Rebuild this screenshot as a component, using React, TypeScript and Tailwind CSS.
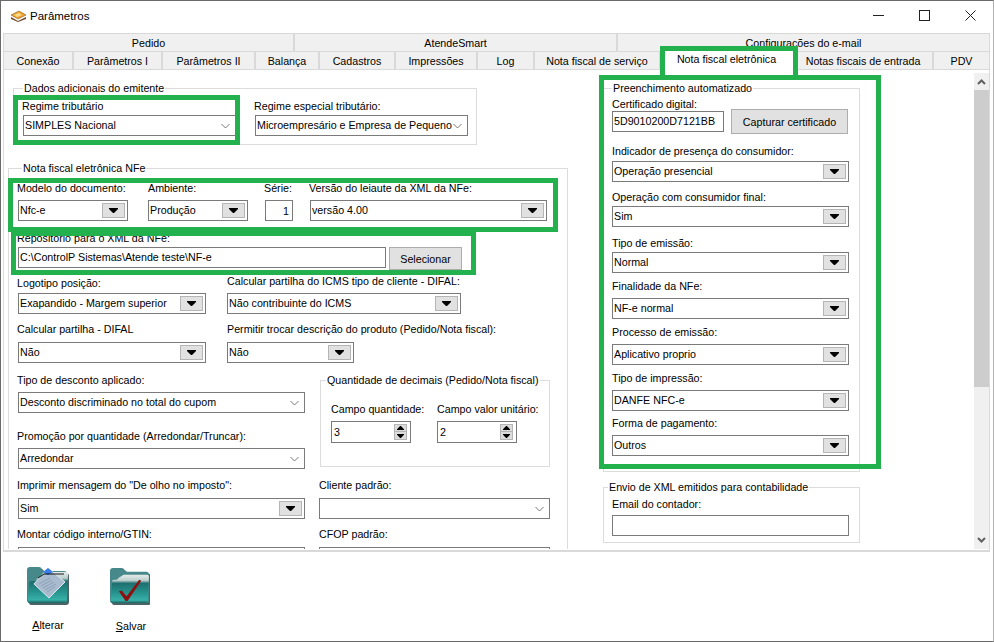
import React from 'react';

const Chevron = () => (
  <svg width="9" height="6" viewBox="0 0 9 6" className="mr-[5px] shrink-0">
    <path d="M0.500 1l4 4 4-4" fill="none" stroke="#777" strokeWidth="1" />
  </svg>
);

const Arrow = ({ up = false, small = false }: { up?: boolean; small?: boolean }) => (
  <svg width={small ? 7 : 9} height={small ? 4 : 5} viewBox="0 0 9 5" preserveAspectRatio="none" className={up ? 'rotate-180' : ''}>
    <path d="M0 0h9v1L6 4H5.500v1h-2V4H3L0 1z" fill="#000" />
  </svg>
);

const Label = ({ children }: { children: React.ReactNode }) => (
  <div className="h-[14px] leading-[14px] whitespace-nowrap">{children}</div>
);

// combo with the grey drop button
const Drop = ({ value, className = '' }: { value?: string; className?: string }) => (
  <div className={`h-[21px] border border-[#7a7a7a] bg-white flex items-center justify-between pl-[1px] pr-[2px] overflow-hidden ${className}`}>
    <span className="whitespace-nowrap -mt-[1px]">{value}</span>
    <div className="w-[23px] h-[15px] shrink-0 bg-[#e1e1e1] border border-[#b5b5b5] flex items-center justify-center">
      <Arrow />
    </div>
  </div>
);

// flat combo with the thin chevron
const Combo = ({ value, className = '' }: { value?: string; className?: string }) => (
  <div className={`h-[21px] border border-[#7a7a7a] bg-white flex items-center justify-between pl-[1px] overflow-hidden ${className}`}>
    <span className="whitespace-nowrap -mt-[1px]">{value}</span>
    <Chevron />
  </div>
);

const Input = ({ value, className = '' }: { value?: string; className?: string }) => (
  <div className={`h-[21px] border border-[#7a7a7a] bg-white flex items-center pl-[1px] whitespace-nowrap ${className}`}>
    <span className="-mt-[1px]">{value}</span>
  </div>
);

const Spin = ({ value }: { value: string }) => (
  <div className="w-[80px] h-[22px] border border-[#7a7a7a] bg-white flex items-center justify-between pl-[2px] pr-[3px]">
    <span>{value}</span>
    <div className="w-[13px] flex flex-col">
      <div className="h-[8px] bg-[#dcdcdc] border border-[#b5b5b5] flex items-center justify-center"><Arrow up small /></div>
      <div className="h-[8px] bg-[#dcdcdc] border border-t-0 border-[#b5b5b5] flex items-center justify-center"><Arrow small /></div>
    </div>
  </div>
);

const GrayButton = ({ text, className = '' }: { text: string; className?: string }) => (
  <div className={`bg-[#e1e1e1] border border-[#adadad] flex items-center justify-center whitespace-nowrap ${className}`}>{text}</div>
);

const row1 = [
  { label: 'Pedido', w: 'w-[291px]' },
  { label: 'AtendeSmart', w: 'w-[323px]' },
  { label: 'Configurações do e-mail', w: 'w-[373px]' },
];

const row2 = [
  { label: 'Conexão', w: 'w-[70px]' },
  { label: 'Parâmetros I', w: 'w-[89px]' },
  { label: 'Parâmetros II', w: 'w-[93px]' },
  { label: 'Balança', w: 'w-[64px]' },
  { label: 'Cadastros', w: 'w-[76px]' },
  { label: 'Impressões', w: 'w-[82px]' },
  { label: 'Log', w: 'w-[57px]' },
  { label: 'Nota fiscal de serviço', w: 'w-[126px]' },
  { label: 'Nota fiscal eletrônica', w: 'w-[133px]', active: true },
  { label: 'Notas fiscais de entrada', w: 'w-[140px]' },
  { label: 'PDV', w: 'w-[57px]' },
];

const autoFields = [
  { label: 'Indicador de presença do consumidor:', value: 'Operação presencial', mt: 'mt-[10px]', gap: 'mt-[3px]' },
  { label: 'Operação com consumidor final:', value: 'Sim', mt: 'mt-[8px]', gap: 'mt-[2px]' },
  { label: 'Tipo de emissão:', value: 'Normal', mt: 'mt-[9px]', gap: 'mt-[2px]' },
  { label: 'Finalidade da NFe:', value: 'NF-e normal', mt: 'mt-[6px]', gap: 'mt-[5px]' },
  { label: 'Processo de emissão:', value: 'Aplicativo proprio', mt: 'mt-[6px]', gap: 'mt-[5px]' },
  { label: 'Tipo de impressão:', value: 'DANFE NFC-e', mt: 'mt-[6px]', gap: 'mt-[5px]' },
  { label: 'Forma de pagamento:', value: 'Outros', mt: 'mt-[5px]', gap: 'mt-[5px]' },
];

const FolderBase = ({ id }: { id: string }) => (
  <>
    <defs>
      <linearGradient id={id} x1="0" y1="0" x2="0" y2="1">
        <stop offset="0" stopColor="#e6ebea" />
        <stop offset="0.2" stopColor="#b9cfcc" />
        <stop offset="0.3" stopColor="#1f6f70" />
        <stop offset="0.6" stopColor="#248f8a" />
        <stop offset="0.9" stopColor="#37b0a8" />
        <stop offset="1" stopColor="#17605f" />
      </linearGradient>
    </defs>
    <path d="M2 5q0-3 3-3h9q2 0 3 2l1 2h21q3 0 3 3v26q0 3-3 3H4q-2 0-2-3z" fill="#0f2f30" opacity="0.75" transform="translate(1 1)" />
    <path d="M1 4q0-3 3-3h9q2 0 3 2l1 2h21q3 0 3 3v26q0 3-3 3H4q-3 0-3-3z" fill="#47898b" />
  </>
);

const FolderAlterar = () => (
  <svg width="46" height="40" viewBox="0 0 46 40">
    <FolderBase id="fa" />
    <path d="M12 12L22 6h18q3 0 2 3l-1 25q0 3-3 3H4q-3 0-2-3l1-17q0-2 2-2h3z" fill="url(#fa)" />
    <path d="M22 2L39 16 23 32 8 18z" fill="#a9bccf" stroke="#dfe7ef" strokeWidth="1" />
    <path d="M22 2l5 4-5 3-5-3z" fill="#3b7de8" />
    <path d="M13 18l11-6M15 20l11-6M17 22l11-6M19 24l11-6M21 26l8-5" stroke="#8598ae" strokeWidth="0.8" />
    <path d="M12 12l6-4h20" fill="none" stroke="#000" strokeWidth="0.9" />
  </svg>
);

const FolderSalvar = () => (
  <svg width="41" height="38" viewBox="0 0 42 39">
    <FolderBase id="fs" />
    <path d="M10 11l5-3h24q2 0 2 2l-1 24q0 3-3 3H4q-3 0-2-3l1-19q0-2 2-2h3z" fill="url(#fs)" />
    <path d="M10 25l3-1 5 6 13-17 2 1-14 21h-2z" fill="#8e1010" />
  </svg>
);

const TitleIcon = () => (
  <svg width="17" height="13" viewBox="0 0 17 13">
    <path d="M1 5l8-4 7 4-8 4z" fill="#f0a32e" stroke="#8a5a1c" strokeWidth="0.6" />
    <path d="M1 7l7 4 8-4v2l-8 3-7-3z" fill="#6e4a2a" />
    <path d="M4 5l5-2 3 2-5 2z" fill="#f9dd8a" />
  </svg>
);

export default function App() {
  return (
    <div className="w-[994px] h-[642px] relative overflow-hidden bg-white border border-[#6a6a6a] border-r-[#b0b0b0] text-[10.7px] leading-[14px] text-black font-['Liberation_Sans',sans-serif]">
      {/* title bar */}
      <div className="h-[32px] flex items-center">
        <div className="ml-[9px] w-[20px] -mt-[1px]"><TitleIcon /></div>
        <span className="text-[11.5px] -mt-[2px]">Parâmetros</span>
        <div className="ml-auto flex h-full -mt-[4px]">
          <div className="w-[46px] flex items-center justify-center">
            <svg width="11" height="11" viewBox="0 0 11 11"><path d="M0 5.500h11" stroke="#222" /></svg>
          </div>
          <div className="w-[46px] flex items-center justify-center">
            <svg width="11" height="11" viewBox="0 0 11 11"><rect x="0.500" y="0.500" width="10" height="10" fill="none" stroke="#222" /></svg>
          </div>
          <div className="w-[46px] flex items-center justify-center">
            <svg width="11" height="11" viewBox="0 0 11 11"><path d="M0.500 0.500l10 10M10.500 0.500l-10 10" stroke="#222" /></svg>
          </div>
        </div>
      </div>

      {/* tabs */}
      <div className="ml-[2px]">
        <div className="flex h-[18px]">
          {row1.map((t) => (
            <div key={t.label} className={`${t.w} bg-[#f0f0f0] border border-b-0 border-[#d9d9d9] flex items-center justify-center`}>{t.label}</div>
          ))}
        </div>
        <div className="flex h-[18px]">
          {row2.map((t) => (
            <div
              key={t.label}
              className={
                t.active
                  ? `${t.w} h-[22px] -mt-[2px] bg-white flex items-center justify-center relative pb-[2px]`
                  : `${t.w} bg-[#f0f0f0] border border-b-0 border-[#d9d9d9] flex items-center justify-center`
              }
            >
              {t.label}
            </div>
          ))}
        </div>
      </div>

      {/* panel */}
      <div className="ml-[2px] w-[987px] h-[483px] border border-t-[#d9d9d9] border-[#d9d9d9] border-b-2 pt-[3px] flex">
        <div className="w-[972px] h-[476px] overflow-hidden flex">
          {/* left column */}
          <div className="w-[595px] shrink-0 pl-[4px]">
            <fieldset className="mt-[8px] ml-[5px] w-[464px] h-[64px] border border-[#dcdcdc] pl-[8px]">
              <legend className="ml-[1px] px-[1px] leading-[14px]">Dados adicionais do emitente</legend>
              <div className="flex pt-[4px]">
                <div className="w-[214px]">
                  <Label>Regime tributário</Label>
                  <Combo value="SIMPLES Nacional" className="w-[213px] ml-[1px] mt-[2px] h-[20px]" />
                </div>
                <div className="ml-[18px] w-[214px]">
                  <Label>Regime especial tributário:</Label>
                  <Combo value="Microempresário e Empresa de Pequeno" className="w-[213px] ml-[1px] mt-[2px] h-[20px]" />
                </div>
              </div>
            </fieldset>

            <fieldset className="mt-[16px] w-[560px] h-[420px] border border-[#dcdcdc] pl-[8px]">
              <legend className="ml-[5px] px-[1px] leading-[14px]">Nota fiscal eletrônica NFe</legend>
              <div className="flex pt-[6px]">
                <div className="w-[111px]">
                  <Label>Modelo do documento:</Label>
                  <Drop value="Nfc-e" className="w-[110px] ml-[1px] mt-[5px]" />
                </div>
                <div className="ml-[20px] w-[100px]">
                  <Label>Ambiente:</Label>
                  <Drop value="Produção" className="w-[100px] mt-[5px]" />
                </div>
                <div className="ml-[16px] w-[29px]">
                  <Label>Série:</Label>
                  <div className="w-[28px] h-[21px] ml-[1px] mt-[5px] border border-[#7a7a7a] flex items-center justify-end pr-[3px]">1</div>
                </div>
                <div className="ml-[16px] w-[238px]">
                  <Label>Versão do leiaute da XML da NFe:</Label>
                  <Drop value="versão 4.00" className="w-[237px] ml-[1px] mt-[5px]" />
                </div>
              </div>

              <div className="mt-[10px]">
                <Label>Repositório para o XML da NFe:</Label>
                <div className="flex items-start mt-[2px] ml-[1px]">
                  <Input value="C:\ControlP Sistemas\Atende teste\NF-e" className="w-[368px]" />
                  <GrayButton text="Selecionar" className="w-[73px] h-[23px] ml-[3px]" />
                </div>
              </div>

              <div className="flex mt-[6px]">
                <div className="w-[189px]">
                  <Label>Logotipo posição:</Label>
                  <Drop value="Exapandido - Margem superior" className="w-[188px] ml-[1px] mt-[3px]" />
                </div>
                <div className="ml-[21px] w-[235px] -mt-[2px]">
                  <Label>Calcular partilha do ICMS tipo de cliente - DIFAL:</Label>
                  <Drop value="Não contribuinte do ICMS" className="w-[234px] mt-[5px]" />
                </div>
              </div>

              <div className="flex mt-[8px]">
                <div className="w-[189px]">
                  <Label>Calcular partilha - DIFAL</Label>
                  <Drop value="Não" className="w-[188px] ml-[1px] mt-[6px]" />
                </div>
                <div className="ml-[21px] w-[300px]">
                  <Label>Permitir trocar descrição do produto (Pedido/Nota fiscal):</Label>
                  <Drop value="Não" className="w-[127px] mt-[6px]" />
                </div>
              </div>

              <div className="flex mt-[10px]">
                <div className="w-[288px]">
                  <Label>Tipo de desconto aplicado:</Label>
                  <Combo value="Desconto discriminado no total do cupom" className="w-[287px] ml-[1px] mt-[5px]" />
                  <div className="mt-[16px]">
                    <Label>Promoção por quantidade (Arredondar/Truncar):</Label>
                  </div>
                  <Combo value="Arredondar" className="w-[287px] ml-[1px] mt-[5px]" />
                </div>
                <fieldset className="ml-[15px] w-[230px] h-[94px] border border-[#dcdcdc] pl-[10px]">
                  <legend className="-ml-[5px] px-[1px] leading-[14px] whitespace-nowrap">Quantidade de decimais (Pedido/Nota fiscal)</legend>
                  <div className="flex pt-[15px]">
                    <div className="w-[106px]">
                      <Label>Campo quantidade:</Label>
                      <div className="mt-[5px]"><Spin value="3" /></div>
                    </div>
                    <div>
                      <Label>Campo valor unitário:</Label>
                      <div className="mt-[5px]"><Spin value="2" /></div>
                    </div>
                  </div>
                </fieldset>
              </div>

              <div className="flex mt-[9px]">
                <div className="w-[288px]">
                  <Label>Imprimir mensagem do "De olho no imposto":</Label>
                  <Drop value="Sim" className="w-[287px] ml-[1px] mt-[6px]" />
                </div>
                <div className="ml-[14px] w-[232px]">
                  <Label>Cliente padrão:</Label>
                  <Combo className="w-[231px] mt-[6px]" />
                </div>
              </div>

              <div className="flex mt-[8px]">
                <div className="w-[288px]">
                  <Label>Montar código interno/GTIN:</Label>
                  <Combo className="w-[287px] ml-[1px] mt-[6px]" />
                </div>
                <div className="ml-[14px] w-[232px]">
                  <Label>CFOP padrão:</Label>
                  <Combo className="w-[231px] mt-[6px]" />
                </div>
              </div>
            </fieldset>
          </div>

          {/* right column */}
          <div className="w-[257px] shrink-0 ml-[4px]">
            <fieldset className="mt-[8px] w-[257px] h-[391px] border border-[#dcdcdc] pl-[8px]">
              <legend className="ml-[0px] px-[1px] leading-[14px]">Preenchimento automatizado</legend>
              <div className="pt-[2px]">
                <Label>Certificado digital:</Label>
              </div>
              <div className="h-[25px] flex items-center -mt-[2px]">
                <Input value="5D9010200D7121BB" className="w-[112px]" />
                <GrayButton text="Capturar certificado" className="w-[117px] h-[25px] ml-[7px]" />
              </div>
              {autoFields.map((f) => (
                <div key={f.label} className={f.mt}>
                  <Label>{f.label}</Label>
                  <Drop value={f.value} className={`w-[237px] ${f.gap}`} />
                </div>
              ))}
            </fieldset>

            <fieldset className="mt-[8px] w-[257px] h-[63px] border border-[#dcdcdc] pl-[8px]">
              <legend className="-ml-[4px] px-[1px] leading-[14px]">Envio de XML emitidos para contabilidade</legend>
              <div className="pt-[3px]">
                <Label>Email do contador:</Label>
              </div>
              <Input className="w-[237px] mt-[4px]" />
            </fieldset>
          </div>
        </div>

        {/* scrollbar */}
        <div className="w-[15px] h-[476px] bg-[#f0f0f0] flex flex-col items-center shrink-0">
          <svg width="9" height="6" viewBox="0 0 9 6" className="mt-[6px]"><path d="M1 5l3.500-3.500L8 5" fill="none" stroke="#606060" strokeWidth="2" /></svg>
          <div className="w-full h-[297px] bg-[#cdcdcd] mt-[5px]" />
          <svg width="9" height="6" viewBox="0 0 9 6" className="mt-auto mb-[6px]"><path d="M1 1l3.500 3.500L8 1" fill="none" stroke="#606060" strokeWidth="2" /></svg>
        </div>
      </div>

      {/* bottom buttons */}
      <div className="flex pl-[17px] pt-[14px]">
        <div className="w-[60px] flex flex-col items-center">
          <div className="h-[40px] ml-[1px]"><FolderAlterar /></div>
          <div className="mt-[12px]"><span className="underline">A</span>lterar</div>
        </div>
        <div className="w-[60px] ml-[23px] flex flex-col items-center">
          <div className="h-[40px] pt-[1px] -ml-[3px]"><FolderSalvar /></div>
          <div className="mt-[13px]"><span className="underline">S</span>alvar</div>
        </div>
      </div>

      {/* green highlight boxes drawn over the form */}
      <div className="absolute left-[12px] top-[94px] w-[227px] h-[50px] border-[5px] border-[#22b14c]" />
      <div className="absolute left-[7px] top-[177px] w-[550px] h-[54px] border-[5px] border-[#22b14c]" />
      <div className="absolute left-[10px] top-[230px] w-[465px] h-[44px] border-[5px] border-[#22b14c]" />
      <div className="absolute left-[659px] top-[45px] w-[138px] h-[31px] border-[5px] border-b-0 border-[#22b14c]" />
      <div className="absolute left-[598px] top-[74px] w-[282px] h-[394px] border-[5px] border-[#22b14c]" />
    </div>
  );
}
